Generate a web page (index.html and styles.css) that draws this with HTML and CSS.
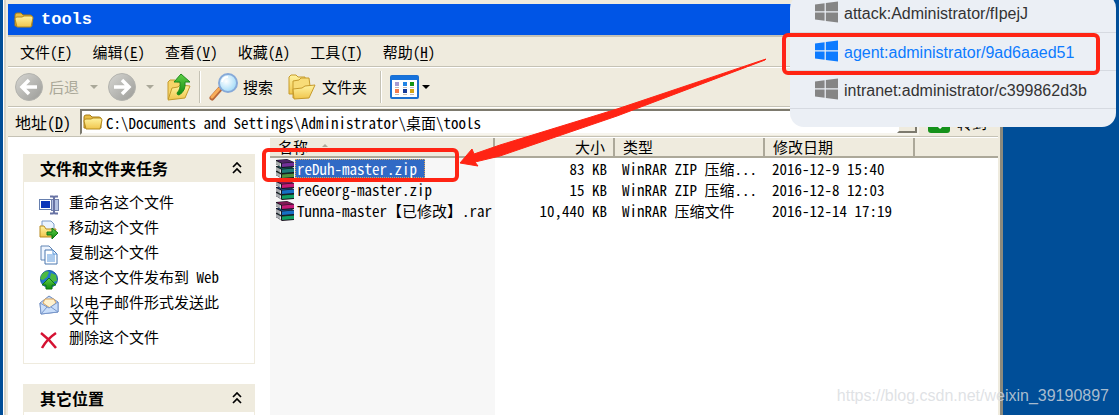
FILE: index.html
```html
<!DOCTYPE html>
<html lang="zh-CN">
<head>
<meta charset="utf-8">
<title>tools</title>
<link rel="stylesheet" href="styles.css">
</head>
<body>
<svg class="defs" aria-hidden="true">
  <defs>
    <linearGradient id="gold" x1="0" y1="0" x2="0" y2="1"><stop offset="0" stop-color="#fff3a0"/><stop offset="1" stop-color="#f0c54c"/></linearGradient>
    <linearGradient id="grey" x1="0" y1="0" x2="1" y2="1"><stop offset="0" stop-color="#d6d6d2"/><stop offset="1" stop-color="#9b9b97"/></linearGradient>
    <linearGradient id="green" x1="0" y1="0" x2="0" y2="1"><stop offset="0" stop-color="#5fd045"/><stop offset="1" stop-color="#128a12"/></linearGradient>
    <radialGradient id="lens" cx=".4" cy=".4" r=".6"><stop offset="0" stop-color="#fff"/><stop offset="1" stop-color="#a5dcf8"/></radialGradient>
    <symbol id="folder" viewBox="0 0 20 18">
      <path d="M1 15V4q0-2 2-2h4l2 2h7q2 0 2 2v9z" fill="#e8bd45" stroke="#a57b16"/>
      <path d="M3 16L1 8q0-2 2-2h5l2-1h7q2 0 2 2l-2 9z" fill="url(#gold)" stroke="#b58a1c"/>
    </symbol>
    <symbol id="book" viewBox="0 0 20 9">
      <path d="M1 1L12 0l7 3v5L7 9 1 5z" fill="#1a1420"/>
      <path d="M2 1.500L12 .5l6 2.500L7 4z" fill="currentColor" opacity=".6"/>
      <path d="M7 4.500l12-1V7L7 8z" fill="currentColor"/>
      <path d="M1 2l5 2.500v3.500L1 5z" fill="#dfe4e8"/>
      <path d="M2 2v4M4 3v4" stroke="#54545c" stroke-width=".8"/>
    </symbol>
    <symbol id="books" viewBox="0 0 20 20">
      <use href="#book" y="11" width="20" height="9" color="#12a062"/>
      <use href="#book" y="6" width="20" height="9" color="#1670c4"/>
      <use href="#book" y="0" width="20" height="9" color="#c41a78"/>
    </symbol>
    <symbol id="win" viewBox="0 0 24 22">
      <path d="M0 3.2L10 1.8V10.300H0zM11.300 1.600L24 0V10.300H11.300zM0 11.600H10V20L0 18.700zM11.300 11.600H24V22L11.300 20.300z" fill="currentColor"/>
    </symbol>
    <symbol id="chev" viewBox="0 0 10 12">
      <path d="M1 5l4-4 4 4M1 11l4-4 4 4" fill="none" stroke="#000" stroke-width="1.700"/>
    </symbol>
  </defs>
</svg>

<main class="window">
  <header class="title"><svg class="ic-title"><use href="#folder"/></svg><h1>tools</h1></header>

  <nav class="menu">
    <button>文件(<u>F</u>)</button><button>编辑(<u>E</u>)</button><button>查看(<u>V</u>)</button><button>收藏(<u>A</u>)</button><button>工具(<u>T</u>)</button><button>帮助(<u>H</u>)</button>
  </nav>

  <div class="toolbar">
    <button class="back" disabled>
      <svg class="ic-round" viewBox="0 0 28 28"><circle cx="14" cy="14" r="13.500" fill="url(#grey)" stroke="#b3b3ae"/><path d="M22 14H8M14 7l-7 7 7 7" fill="none" stroke="#fff" stroke-width="3.500"/></svg>
      后退
      <span class="caret caret-off"></span>
    </button>
    <button class="forward" disabled aria-label="前进">
      <svg class="ic-round" viewBox="0 0 28 28"><circle cx="14" cy="14" r="13.500" fill="url(#grey)" stroke="#b3b3ae"/><path d="M6 14h14M14 7l7 7-7 7" fill="none" stroke="#fff" stroke-width="3.500"/></svg>
      <span class="caret caret-off"></span>
    </button>
    <button class="up" aria-label="向上">
      <svg class="ic-up" viewBox="0 0 24 28"><path d="M1 26V9l2-2h5l2 2h4v6z" fill="#f6d468" stroke="#c59a2c"/><path d="M1 27l4-12 6-1 2-2 10 1-5 12z" fill="url(#gold)" stroke="#c39a2c"/><path d="M14 1l9 8h-5q1 9-6 13-2 0-2-2 4-4 3-11H7z" fill="url(#green)" stroke="#1d8a1c"/></svg>
    </button>
    <span class="rule"></span>
    <button class="search">
      <svg class="ic-search" viewBox="0 0 30 28"><path d="M3 25l8-9" stroke="#b8673a" stroke-width="5" stroke-linecap="round"/><path d="M3 24l7-8" stroke="#f8ad5a" stroke-width="3" stroke-linecap="round"/><circle cx="19" cy="10" r="9" fill="url(#lens)" stroke="#86a9d8" stroke-width="2"/><path d="M13 9q1-5 6-5" stroke="#fff" stroke-width="2" fill="none"/></svg>
      搜索
    </button>
    <button class="folders">
      <svg class="ic-folders" viewBox="0 0 28 26"><path d="M1 20V3l2-2h5l2 2h7v4l2 1-4 12z" fill="url(#gold)" stroke="#c69a2b"/><path d="M5 24V7l6-1 2-2h8l1 8z" fill="#f8dc78" stroke="#c69a2b"/><path d="M6 25l-1-10 9-1 3-2 10-1-6 13z" fill="url(#gold)" stroke="#c69a2b"/></svg>
      文件夹
    </button>
    <span class="rule"></span>
    <button class="views" aria-label="查看方式">
      <svg class="ic-views" viewBox="0 0 29 24"><rect x="1" y="1" width="27" height="22" rx="1" fill="#fff" stroke="#1a6fd0" stroke-width="2"/><path d="M1 1h27v4H1z" fill="#1672dc"/><path d="M5 7h4v4H5z" fill="#a79bd0"/><path d="M13 7h4v4h-4z" fill="#2284e4"/><path d="M20 7h4v4h-4z" fill="#149414"/><path d="M5 14h4v4H5z" fill="#f57b4c"/><path d="M13 14h4v4h-4z" fill="#163c9a"/><path d="M20 14h4v4h-4z" fill="#d2a414"/><path d="M5 12.500h4m4 0h4m3 0h4M5 19.500h4m4 0h4m3 0h4" stroke="#bbb"/></svg>
      <span class="caret"></span>
    </button>
  </div>

  <form class="address">
    <label for="path">地址(<u>D</u>)</label>
    <div class="field">
      <svg class="ic-field"><use href="#folder"/></svg>
      <input id="path" type="text" value="C:\Documents and Settings\Administrator\桌面\tools">
      <button type="button" class="drop" aria-label="展开"></button>
    </div>
    <button type="button" class="go"><svg class="ic-go" viewBox="0 0 22 22"><rect width="22" height="22" rx="3" fill="#15921b"/><path d="M4 11h12M11 5l6 6-6 6" fill="none" stroke="#fff" stroke-width="3"/></svg>转到</button>
  </form>

  <div class="body">
    <aside class="side">
      <section class="card">
        <h2>文件和文件夹任务<svg class="ic-chev"><use href="#chev"/></svg></h2>
        <ul>
          <li><svg viewBox="0 0 20 20"><rect x=".5" y="4.500" width="13" height="10" fill="#fff" stroke="#667fae"/><rect x="2" y="6" width="9" height="7" fill="#0b35b8"/><rect x="12.500" y="4.500" width="7" height="11" fill="#b4c2e2" stroke="#7180aa"/><path d="M11 1.500h3l1 1 1-1h3M15 2v16M11 18.500h3l1-1 1 1h3" stroke="#6873a4" stroke-width="2" fill="none"/></svg><a href="#">重命名这个文件</a></li>
          <li><svg viewBox="0 0 20 20"><path d="M3 1h9l3 3v10H3z" fill="#eaf3ff" stroke="#7d9cc8"/><path d="M1 17V6h4l2 3h10l-2 8z" fill="url(#gold)" stroke="#b88b20"/><path d="M8 12h5V8l6 5-6 6v-4H8z" fill="url(#green)" stroke="#0f7614"/></svg><a href="#">移动这个文件</a></li>
          <li><svg viewBox="0 0 20 20"><path d="M2 1h8l3 3v11H2z" fill="#eef5ff" stroke="#6185b4"/><path d="M6 5h8l4 4v10H6z" fill="#fff" stroke="#4b77ae"/><path d="M14 5v4h4M8 10h8M8 12h8M8 14h8M8 16h8" stroke="#5b98dc" fill="none"/></svg><a href="#">复制这个文件</a></li>
          <li><svg viewBox="0 0 20 20"><circle cx="10" cy="9" r="8.500" fill="#2277cc" stroke="#195a9b"/><path d="M3 4q4-4 7-2l-2 5-4 3-3-1zM12 3l5 2 1 6-4 1-3-4z" fill="#4cba41"/><path d="M10 8l7 7h-4v4H7v-4H3z" fill="url(#green)" stroke="#0c7614"/></svg><a href="#">将这个文件发布到 Web</a></li>
          <li class="two"><svg viewBox="0 0 20 20"><path d="M1 8l9-7 9 6v10L2 19z" fill="#c6dcf6" stroke="#6c88bc"/><path d="M4 8l2-4h9l2 4-6 5z" fill="#fff2cf" stroke="#dca55a"/><path d="M1 8l9 5 9-6v10L2 19z" fill="#c9defa" stroke="#7796ca"/><path d="M2 19l6-7m11 5l-7-5" stroke="#7796ca"/></svg><a href="#">以电子邮件形式发送此文件</a></li>
          <li><svg viewBox="0 0 20 20"><path d="M2 3q8 6 15 15M17 3Q8 9 3 18" stroke="#d51232" stroke-width="2.500" fill="none"/></svg><a href="#">删除这个文件</a></li>
        </ul>
      </section>
      <section class="card">
        <h2>其它位置<svg class="ic-chev"><use href="#chev"/></svg></h2>
        <ul></ul>
      </section>
    </aside>

    <div class="list">
      <table>
        <thead><tr><th class="c-name">名称<span class="sort"></span></th><th class="c-size">大小</th><th class="c-type">类型</th><th class="c-date">修改日期</th><th class="c-rest"></th></tr></thead>
        <tbody>
          <tr class="selected"><td><div class="file"><svg><use href="#books"/></svg><span>reDuh-master.zip</span></div></td><td class="num">83 KB</td><td>WinRAR ZIP 压缩...</td><td>2016-12-9 15:40</td><td></td></tr>
          <tr><td><div class="file"><svg><use href="#books"/></svg><span>reGeorg-master.zip</span></div></td><td class="num">15 KB</td><td>WinRAR ZIP 压缩...</td><td>2016-12-8 12:03</td><td></td></tr>
          <tr><td><div class="file"><svg><use href="#books"/></svg><span>Tunna-master【已修改】.rar</span></div></td><td class="num">10,440 KB</td><td>WinRAR 压缩文件</td><td>2016-12-14 17:19</td><td></td></tr>
        </tbody>
      </table>
    </div>
  </div>
</main>

<ul class="hosts">
  <li><svg><use href="#win"/></svg>attack:Administrator/fIpejJ</li>
  <li class="active"><svg><use href="#win"/></svg>agent:administrator/9ad6aaed51</li>
  <li><svg><use href="#win"/></svg>intranet:administrator/c399862d3b</li>
</ul>

<div class="mark mark-host"></div>
<div class="mark mark-file"></div>
<svg class="arrow" viewBox="0 0 310 120"><path d="M309 2L308 3 160 59 43 99 18 105 21 109 3 106 15 92 17 97 43 88 160 52z" fill="#ff2414" stroke="#ff2414" stroke-linejoin="round"/></svg>
<div class="watermark">https://blog.csdn.net/weixin_39190897</div>
</body>
</html>
```

FILE: styles.css
```css
* { box-sizing: border-box; }

body {
  margin: 0;
  height: 100vh;
  overflow: hidden;
  position: relative;
  display: flex;
  padding: 0 116px 0 3px;
  background: #004e98;
  font: 15px/21px "Noto Sans Mono CJK SC", "Noto Sans CJK SC", monospace;
  color: #000;
}

.defs { position: absolute; width: 0; height: 0; }
svg { flex: none; display: block; }
button { font: inherit; color: inherit; background: none; border: 0; padding: 0; display: flex; align-items: center; white-space: nowrap; }
u { text-underline-offset: 2px; }
ul { list-style: none; margin: 0; padding: 0; }

.window {
  flex: 1;
  min-width: 0;
  display: flex;
  flex-direction: column;
  padding: 4px 2px 0 4px;
  background: #efebde;
  border-left: 1px solid #fff;
  border-right: 3px solid #8b897d;
  box-shadow: inset 2px 0 #d8d4c8;
}

.title { flex: none; height: 31px; display: flex; align-items: center; gap: 7px; padding: 1px 0 0 6px; background: #0055e6; color: #fff; }
.title h1 { margin: 0; font: bold 17px/24px "Liberation Mono", monospace; }
.ic-title { width: 20px; height: 18px; }

.menu { flex: none; height: 32px; display: flex; align-items: center; gap: 20px; padding: 0 0 0 12px; border-top: 2px solid #c5c2b5; border-bottom: 1px solid #c5c2b5; }

.toolbar { flex: none; height: 40px; display: flex; align-items: center; padding: 0 0 0 7px; border-top: 1px solid #fff; border-bottom: 1px solid #c5c2b5; }
.toolbar button { line-height: 20px; }
.back { gap: 6px; color: #aaa899; }
.back .caret { margin-left: 5px; }
.forward { gap: 10px; margin-left: 10px; }
.up { margin-left: 13px; }
.rule { width: 2px; height: 32px; margin: 0 8px; background: #c5c2b5; border-right: 1px solid #fff; }
.search { gap: 4px; }
.folders { gap: 6px; margin: 0 5px 0 15px; }
.views { gap: 3px; }
.caret { border: 4px solid transparent; border-top-color: #000; border-bottom: 0; }
.caret-off { border-top-color: #aaa899; }
.ic-round { width: 28px; height: 28px; }
.ic-up { width: 24px; height: 28px; }
.ic-search { width: 30px; height: 28px; }
.ic-folders { width: 28px; height: 26px; }
.ic-views { width: 29px; height: 24px; }

.address { flex: none; height: 30px; display: flex; align-items: center; padding: 0 11px 0 7px; border-top: 1px solid #fff; border-bottom: 1px solid #c5c2b5; }
.address label { font-size: 16px; width: 65px; }
.field { flex: 1; min-width: 0; height: 26px; display: flex; align-items: center; gap: 3px; padding-left: 1px; background: #fff; border: 2px solid; border-color: #7d7a6e #f7f5ee #f7f5ee #7d7a6e; }
.field input { flex: 1; min-width: 0; border: 0; padding: 0; font: inherit; background: none; outline: 0; }
.ic-field { width: 20px; height: 18px; }
.drop { width: 20px; height: 22px; background: #efebde; border: 2px solid; border-color: #fff #7d7a6e #7d7a6e #fff; }
.go { gap: 7px; margin-left: 9px; }
.ic-go { width: 22px; height: 22px; }

.body { flex: 1; min-height: 0; display: flex; overflow: hidden; background: #fff; border-top: 1px solid #fff; }

.side { flex: none; width: 262px; padding: 16px 15px 0 15px; display: flex; flex-direction: column; gap: 20px; }
.card h2 { margin: 0; height: 28px; display: flex; align-items: center; justify-content: space-between; padding: 0 13px 0 17px; background: #efebde; font-size: 16px; line-height: 28px; font-weight: bold; }
.ic-chev { width: 10px; height: 12px; }
.card ul { border: 1px solid #efebde; border-top: 0; padding: 9px 32px 12px 15px; display: flex; flex-direction: column; }
.card li { display: flex; align-items: flex-start; gap: 10px; padding-top: 3px; min-height: 25px; }
.card li svg { width: 20px; height: 20px; margin-top: 1px; }
.card li a { color: inherit; text-decoration: none; line-height: 15px; }
.card .two { min-height: 35px; }

.list { flex: 1; min-width: 0; background: linear-gradient(#f7f7f7, #f7f7f7) 0 0 / 225px 100% no-repeat; }
table { width: 100%; border-collapse: separate; border-spacing: 0; table-layout: fixed; }
th { height: 20px; padding: 0 8px; text-align: left; font-weight: normal; line-height: 18px; background: #efebde; border-right: 2px solid #aca899; border-bottom: 2px solid #aca899; }
.c-name { width: 225px; }
.c-size { width: 120px; text-align: right; }
.c-type, .c-date { width: 150px; }
.c-rest { border-right: 0; }
.sort { display: inline-block; margin: 0 0 6px 14px; border: 3px solid transparent; border-bottom-color: #aca899; border-top: 0; }
td { height: 21px; padding: 0 0 0 7px; line-height: 19px; white-space: nowrap; }
.num { text-align: right; padding-right: 8px; }
.file { display: flex; align-items: center; margin-left: -2px; }
.file svg { width: 20px; height: 20px; }
.file span { padding: 0 2px; }
.selected .file span { padding-right: 8px; background: #316ac5; color: #fff; outline: 1px dotted #d9a35a; outline-offset: -1px; }
.selected svg { filter: hue-rotate(-40deg) saturate(70%); }

.hosts { position: absolute; top: -6px; right: 3px; width: 326px; height: 133px; background: #ebeff5; border-radius: 14px; font: 16px/20px "Liberation Sans", sans-serif; color: #333; }
.hosts li { height: 38px; display: flex; align-items: center; gap: 6px; padding: 2px 0 0 25px; border-bottom: 1px solid #d6dae1; white-space: nowrap; }
.hosts li:first-child { height: 39px; }
.hosts svg { width: 23px; height: 22px; margin-bottom: 4px; color: #858585; }
.hosts .active, .hosts .active svg { color: #0d7bff; }

.mark { position: absolute; border: 4px solid #ff2414; border-radius: 6px; }
.mark-host { right: 19px; top: 33px; width: 318px; height: 42px; }
.mark-file { left: 262px; top: 148px; width: 197px; height: 34px; }
.arrow { position: absolute; left: 457px; top: 57px; width: 310px; height: 120px; }

.watermark { position: absolute; right: 10px; bottom: 9px; font: 16px/20px "Liberation Sans", sans-serif; color: rgba(215, 218, 222, .8); }
```
